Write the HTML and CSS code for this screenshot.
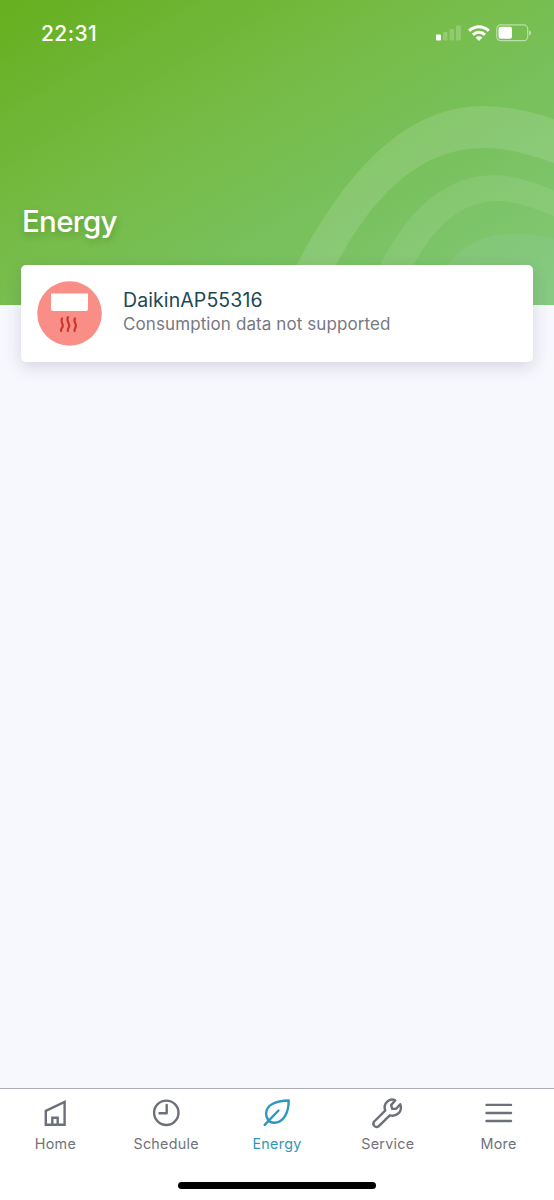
FILE: index.html
```html
<!DOCTYPE html>
<html lang="en">
<head>
<meta charset="utf-8">
<title>Energy</title>
<link rel="stylesheet" href="styles.css">
</head>
<body>
<div class="screen">
  <header class="hero">
    <svg class="hero-art" viewBox="0 0 554 305" aria-hidden="true">
      <path fill="#fff" fill-opacity=".125" d="M277 305C324 203 389 106 483 106C508 106 530 111 554 119V163C530 155 510 148 484 148C414 148 360 205 317 305Z"/>
      <path fill="#fff" fill-opacity=".085" d="M362 305C390 234 430 175 495 175C516 176 532 182 554 190V216C533 208 516 201 498 201C450 201 418 245 396 305Z"/>
      <path fill="#9cd2b0" fill-opacity=".2" d="M422 305C448 250 482 220 554 239V305Z"/>
    </svg>
    <div class="status">
      <span class="clock">22:31</span>
      <div class="indicators">
        <svg class="signal" width="26" height="16" viewBox="0 0 26 16" fill="#fff">
          <rect x="0" y="9.5" width="5" height="6" rx="1"/>
          <g fill-opacity=".2"><rect x="7" y="7" width="4.5" height="8.5" rx="1"/><rect x="13.5" y="4" width="4.5" height="11.5" rx="1"/><rect x="20" y="0.5" width="5" height="15" rx="1"/></g>
        </svg>
        <svg class="wifi" width="22" height="16" viewBox="0 0 22 16">
          <g fill="none" stroke="#fff" stroke-width="3"><path d="M1.2 5.9C6.8.3 15.2.3 20.8 5.9"/><path d="M5 9.9C8.3 6.5 13.7 6.5 17 9.9"/></g>
          <path fill="#fff" d="M7.6 12.4C9.5 10.7 12.5 10.7 14.4 12.4L11 15.9Z"/>
        </svg>
        <svg class="battery" width="36" height="18" viewBox="0 0 36 18">
          <rect x=".7" y=".9" width="31" height="15.8" rx="4" fill="none" stroke="#fff" stroke-opacity=".5" stroke-width="1.2"/>
          <rect x="2.5" y="2.8" width="13.5" height="12" rx="2" fill="#fff"/>
          <path d="M33.2 6.2C35.6 7 35.6 10.8 33.2 11.6Z" fill="#fff" fill-opacity=".55"/>
        </svg>
      </div>
    </div>
    <h1 class="title">Energy</h1>
  </header>
  <main class="content">
    <section class="card">
      <svg class="device-icon" width="65" height="65" viewBox="0 0 65 65">
        <circle cx="32.5" cy="32.5" r="32.3" fill="#f98e87"/>
        <path fill="#fff" d="M14 12.5H51V27.5Q51 30 48.500 30H16.500Q14 30 14 27.500Z"/>
        <g fill="none" stroke="#c5382f" stroke-width="2.2" stroke-linecap="round">
          <path d="M25 37.500C22.800 40.500 26.600 42.500 25.700 45.500C25.200 47.300 23.400 48 24.100 50"/>
          <path d="M31 36.200C28.800 39.700 33 42.200 32.100 45.500C31.500 47.500 30.200 48 30.900 50"/>
          <path d="M38 37.500C35.800 40.500 39.700 42.500 38.900 45.500C38.400 47.300 37 48 37.600 50"/>
        </g>
      </svg>
      <div class="device-text">
        <span class="device-name">DaikinAP55316</span>
        <span class="device-note">Consumption data not supported</span>
      </div>
    </section>
  </main>
  <nav class="tabs">
    <a class="tab">
      <svg class="tab-icon home" viewBox="0 0 30 30"><path d="M5.800 11.800L24.600 2.900V25.700H5.800Z"/><path d="M12.300 25V18.700H17.700V25"/></svg>
      <span class="tab-label">Home</span>
    </a>
    <a class="tab">
      <svg class="tab-icon" viewBox="0 0 30 30"><circle cx="15.300" cy="13.800" r="12.200"/><path d="M15.700 6V14.300H8.500"/></svg>
      <span class="tab-label">Schedule</span>
    </a>
    <a class="tab active">
      <svg class="tab-icon" viewBox="0 0 30 30"><path d="M26.700 1.500C14 1.800 4.400 5.800 4.100 14.500C4 17.200 5 19.400 6.200 21C7.800 23 10.200 24 12.900 23.700C21.700 23.200 26.700 13.500 26.700 1.500Z"/><path d="M2.700 25.800L16.500 11.500"/></svg>
      <span class="tab-label">Energy</span>
    </a>
    <a class="tab">
      <svg class="tab-icon" viewBox="0 0 30 30"><path d="M22.300 1.300C16 -1.300 9.800 4.500 12.200 11.600L1.200 22.500C-1.200 25.800 2.500 29.600 5.800 27.200L16.800 16.300C23.800 18.200 30 12.500 27.200 5.300L23.100 9.800L19.300 9.900L18.100 6.100Z"/></svg>
      <span class="tab-label">Service</span>
    </a>
    <a class="tab">
      <svg class="tab-icon" viewBox="0 0 30 30"><path d="M2.500 5.900H27M2.500 14H27M2.500 22H27"/></svg>
      <span class="tab-label">More</span>
    </a>
  </nav>
  <div class="home-area"><div class="home-indicator"></div></div>
</div>
</body>
</html>
```
FILE: styles.css
```css
* { box-sizing: border-box; }
body { margin: 0; font-family: Inter, "Liberation Sans", sans-serif; }
.screen { width: 554px; height: 1200px; display: flex; flex-direction: column; background: #f7f8fe; overflow: hidden; }
.hero { position: relative; height: 305px; flex: none; display: flex; flex-direction: column; justify-content: space-between; padding: 17px 22px 65px; color: #fff; background: linear-gradient(150deg, #67b022 3%, #77bd4b 44%, #77c059 60%, #82c878 100%); }
.hero-art { position: absolute; inset: 0; width: 554px; height: 305px; }
.status { position: relative; display: flex; justify-content: space-between; align-items: center; height: 32px; padding-left: 19px; }
.clock { font-size: 21px; font-weight: 500; letter-spacing: .4px; }
.indicators { display: flex; align-items: center; height: 18px; }
.wifi { margin-left: 6px; }
.battery { margin-left: 6px; }
.title { position: relative; margin: 0; font-size: 29.500px; line-height: 38px; font-weight: 500; letter-spacing: -.7px; text-shadow: 1px 3px 7px rgba(40, 80, 20, .3); }
.content { position: relative; flex: 1; padding: 0 21px; margin-top: -40px; }
.card { height: 97px; display: flex; align-items: center; gap: 21px; padding: 0 16px; background: #fff; border-radius: 5px; box-shadow: 0 5px 16px rgba(60, 60, 90, .18); }
.device-icon { flex: none; }
.device-text { display: flex; flex-direction: column; padding-bottom: 3px; }
.device-name { font-size: 19.500px; line-height: 24px; color: #1d4853; letter-spacing: .1px; }
.device-note { font-size: 17px; line-height: 24px; color: #767982; letter-spacing: .1px; }
.tabs { height: 79px; flex: none; display: grid; grid-template-columns: repeat(5, 1fr); border-top: 1px solid #abacb4; background: #fff; padding-top: 10px; }
.tab { display: flex; flex-direction: column; align-items: center; gap: 6px; color: #70737c; }
.tab-icon { width: 30px; height: 30px; overflow: visible; fill: none; stroke: #6c707a; stroke-width: 2.400; stroke-linejoin: round; stroke-linecap: round; }
.home { stroke-linejoin: miter; stroke-linecap: butt; }
.tab-label { font-size: 14.300px; line-height: 18px; letter-spacing: .3px; }
.active { color: #3296b4; }
.active .tab-icon { stroke: #2c98bf; }
.home-area { height: 33px; flex: none; display: flex; justify-content: center; padding-top: 15px; background: #fff; }
.home-indicator { width: 198px; height: 7px; border-radius: 4px; background: #000; }
```
